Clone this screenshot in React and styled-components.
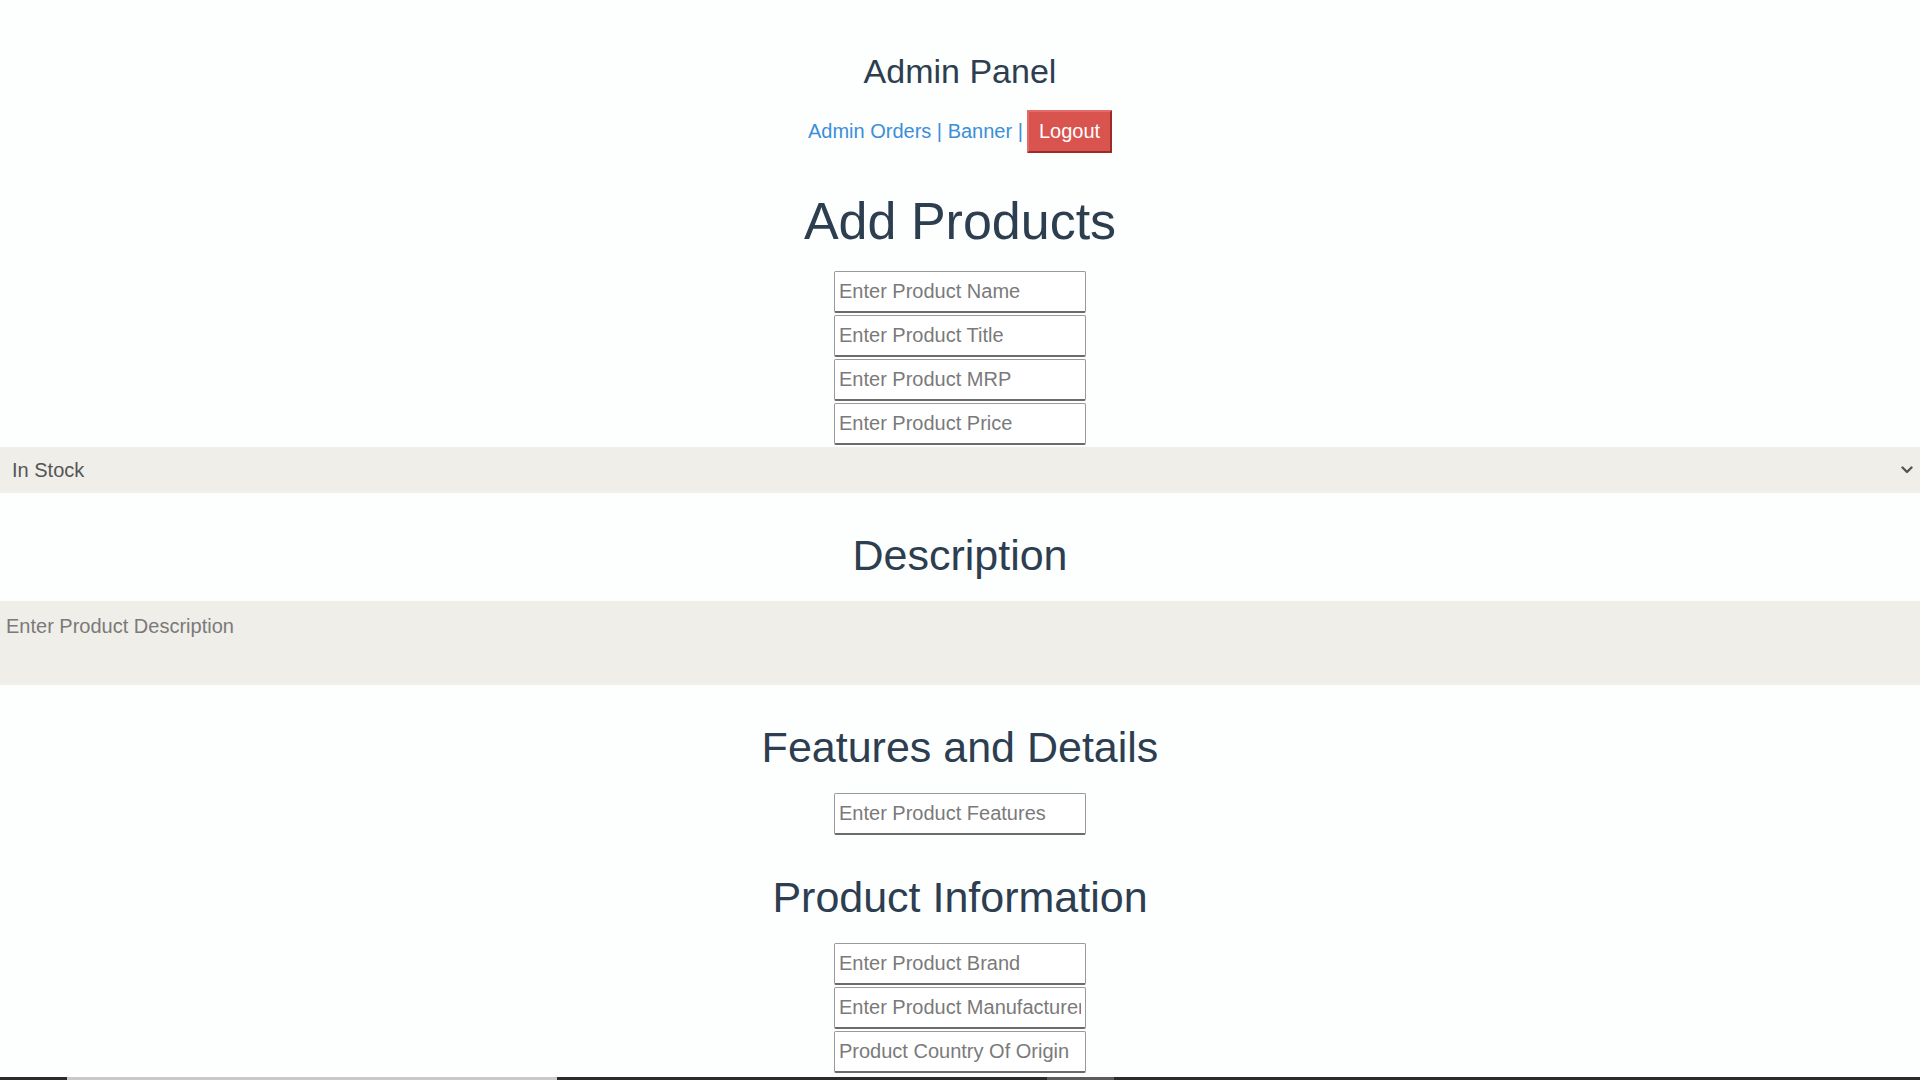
import React from "react";
import styled, { createGlobalStyle } from "styled-components";

const GlobalStyle = createGlobalStyle`
  html, body {
    margin: 0;
    padding: 0;
    background: #fdfefe;
    font-family: "Liberation Sans", Arial, sans-serif;
  }
  * { box-sizing: border-box; }
`;

const Page = styled.main`
  display: flex;
  flex-direction: column;
  align-items: center;
  padding-top: 51px;
  font-family: "Liberation Sans", Arial, sans-serif;
`;

const PanelTitle = styled.h2`
  margin: 0;
  font-size: 34px;
  line-height: 40px;
  font-weight: 400;
  color: #2c3e50;
`;

const NavRow = styled.nav`
  display: flex;
  align-items: center;
  gap: 4px;
  margin-top: 19px;
  height: 43px;
  font-size: 20px;
  color: #3b8fd9;
`;

const NavLink = styled.a`
  color: #3b8fd9;
  text-decoration: none;
  cursor: pointer;
`;

const NavText = styled.span`
  white-space: pre;
`;

const LogoutButton = styled.button`
  height: 43px;
  padding: 0 10px;
  font-family: "Liberation Sans", Arial, sans-serif;
  font-size: 20px;
  color: #fff;
  background: #d9534f;
  border: 2px solid;
  border-color: #e36a66 #9e2b27 #9e2b27 #e36a66;
  border-radius: 1px;
  cursor: pointer;
`;

const Heading = styled.h1`
  margin: ${(p) => (p.$big ? "36px 0 18px" : "36px 0 20px")};
  font-size: ${(p) => (p.$big ? "52px" : "43px")};
  line-height: ${(p) => (p.$big ? "64px" : "52px")};
  font-weight: 400;
  color: #2c3e50;
`;

const InputStack = styled.div`
  display: flex;
  flex-direction: column;
  gap: 2px;
`;

const TextInput = styled.input`
  width: 252px;
  height: 42px;
  padding: 0 4px;
  font-family: "Liberation Sans", Arial, sans-serif;
  font-size: 20px;
  color: #333;
  background: #fff;
  border: 1px solid #9a9a9a;
  border-bottom: 2px solid #6b6b6b;
  border-radius: 2px;
  outline: none;
  &::placeholder {
    color: #7a7a7a;
  }
`;

const SelectWrap = styled.div`
  position: relative;
  align-self: stretch;
  margin-top: 2px;
`;

const StockSelect = styled.select`
  display: block;
  width: 100%;
  height: 46px;
  padding: 0 12px;
  font-family: "Liberation Sans", Arial, sans-serif;
  font-size: 20px;
  color: #555;
  background: #efeee9;
  border: none;
  outline: none;
  appearance: none;
  -webkit-appearance: none;
`;

const Chevron = styled.svg`
  position: absolute;
  right: 7px;
  top: 19px;
  width: 12px;
  height: 8px;
  pointer-events: none;
`;

const DescriptionArea = styled.textarea`
  display: block;
  align-self: stretch;
  height: 84px;
  padding: 14px 6px;
  font-family: "Liberation Sans", Arial, sans-serif;
  font-size: 20px;
  line-height: 23px;
  color: #333;
  background: #efeee9;
  border: none;
  outline: none;
  resize: none;
  &::placeholder {
    color: #7a7a7a;
  }
`;

const Strip = styled.div`
  display: flex;
  align-self: stretch;
  height: 3px;
  margin-top: 4px;
`;

const StripPart = styled.div`
  flex: ${(p) => (p.$w ? `0 0 ${p.$w}px` : "1 1 auto")};
  background: ${(p) => p.$c};
`;

export default function App() {
  return (
    <>
      <GlobalStyle />
      <Page>
        <PanelTitle>Admin Panel</PanelTitle>
        <NavRow>
          <NavText>
            <NavLink>Admin Orders</NavLink> | <NavLink>Banner</NavLink> |
          </NavText>
          <LogoutButton>Logout</LogoutButton>
        </NavRow>

        <Heading $big>Add Products</Heading>
        <InputStack>
          <TextInput placeholder="Enter Product Name" />
          <TextInput placeholder="Enter Product Title" />
          <TextInput placeholder="Enter Product MRP" />
          <TextInput placeholder="Enter Product Price" />
        </InputStack>

        <SelectWrap>
          <StockSelect defaultValue="in">
            <option value="in">In Stock</option>
            <option value="out">Out Of Stock</option>
          </StockSelect>
          <Chevron viewBox="0 0 12 8">
            <path d="M1.5 1.5 L6 6 L10.5 1.5" fill="none" stroke="#555" strokeWidth="2.4" strokeLinecap="round" strokeLinejoin="round" />
          </Chevron>
        </SelectWrap>

        <Heading>Description</Heading>
        <DescriptionArea placeholder="Enter Product Description" />

        <Heading>Features and Details</Heading>
        <InputStack>
          <TextInput placeholder="Enter Product Features" />
        </InputStack>

        <Heading>Product Information</Heading>
        <InputStack>
          <TextInput placeholder="Enter Product Brand" />
          <TextInput placeholder="Enter Product Manufacturer" />
          <TextInput placeholder="Product Country Of Origin" />
        </InputStack>

        <Strip>
          <StripPart $w={67} $c="#2b2b2b" />
          <StripPart $w={490} $c="#c9c9c9" />
          <StripPart $w={490} $c="#2b2b2b" />
          <StripPart $w={67} $c="#5c5c5c" />
          <StripPart $c="#2b2b2b" />
        </Strip>
      </Page>
    </>
  );
}
